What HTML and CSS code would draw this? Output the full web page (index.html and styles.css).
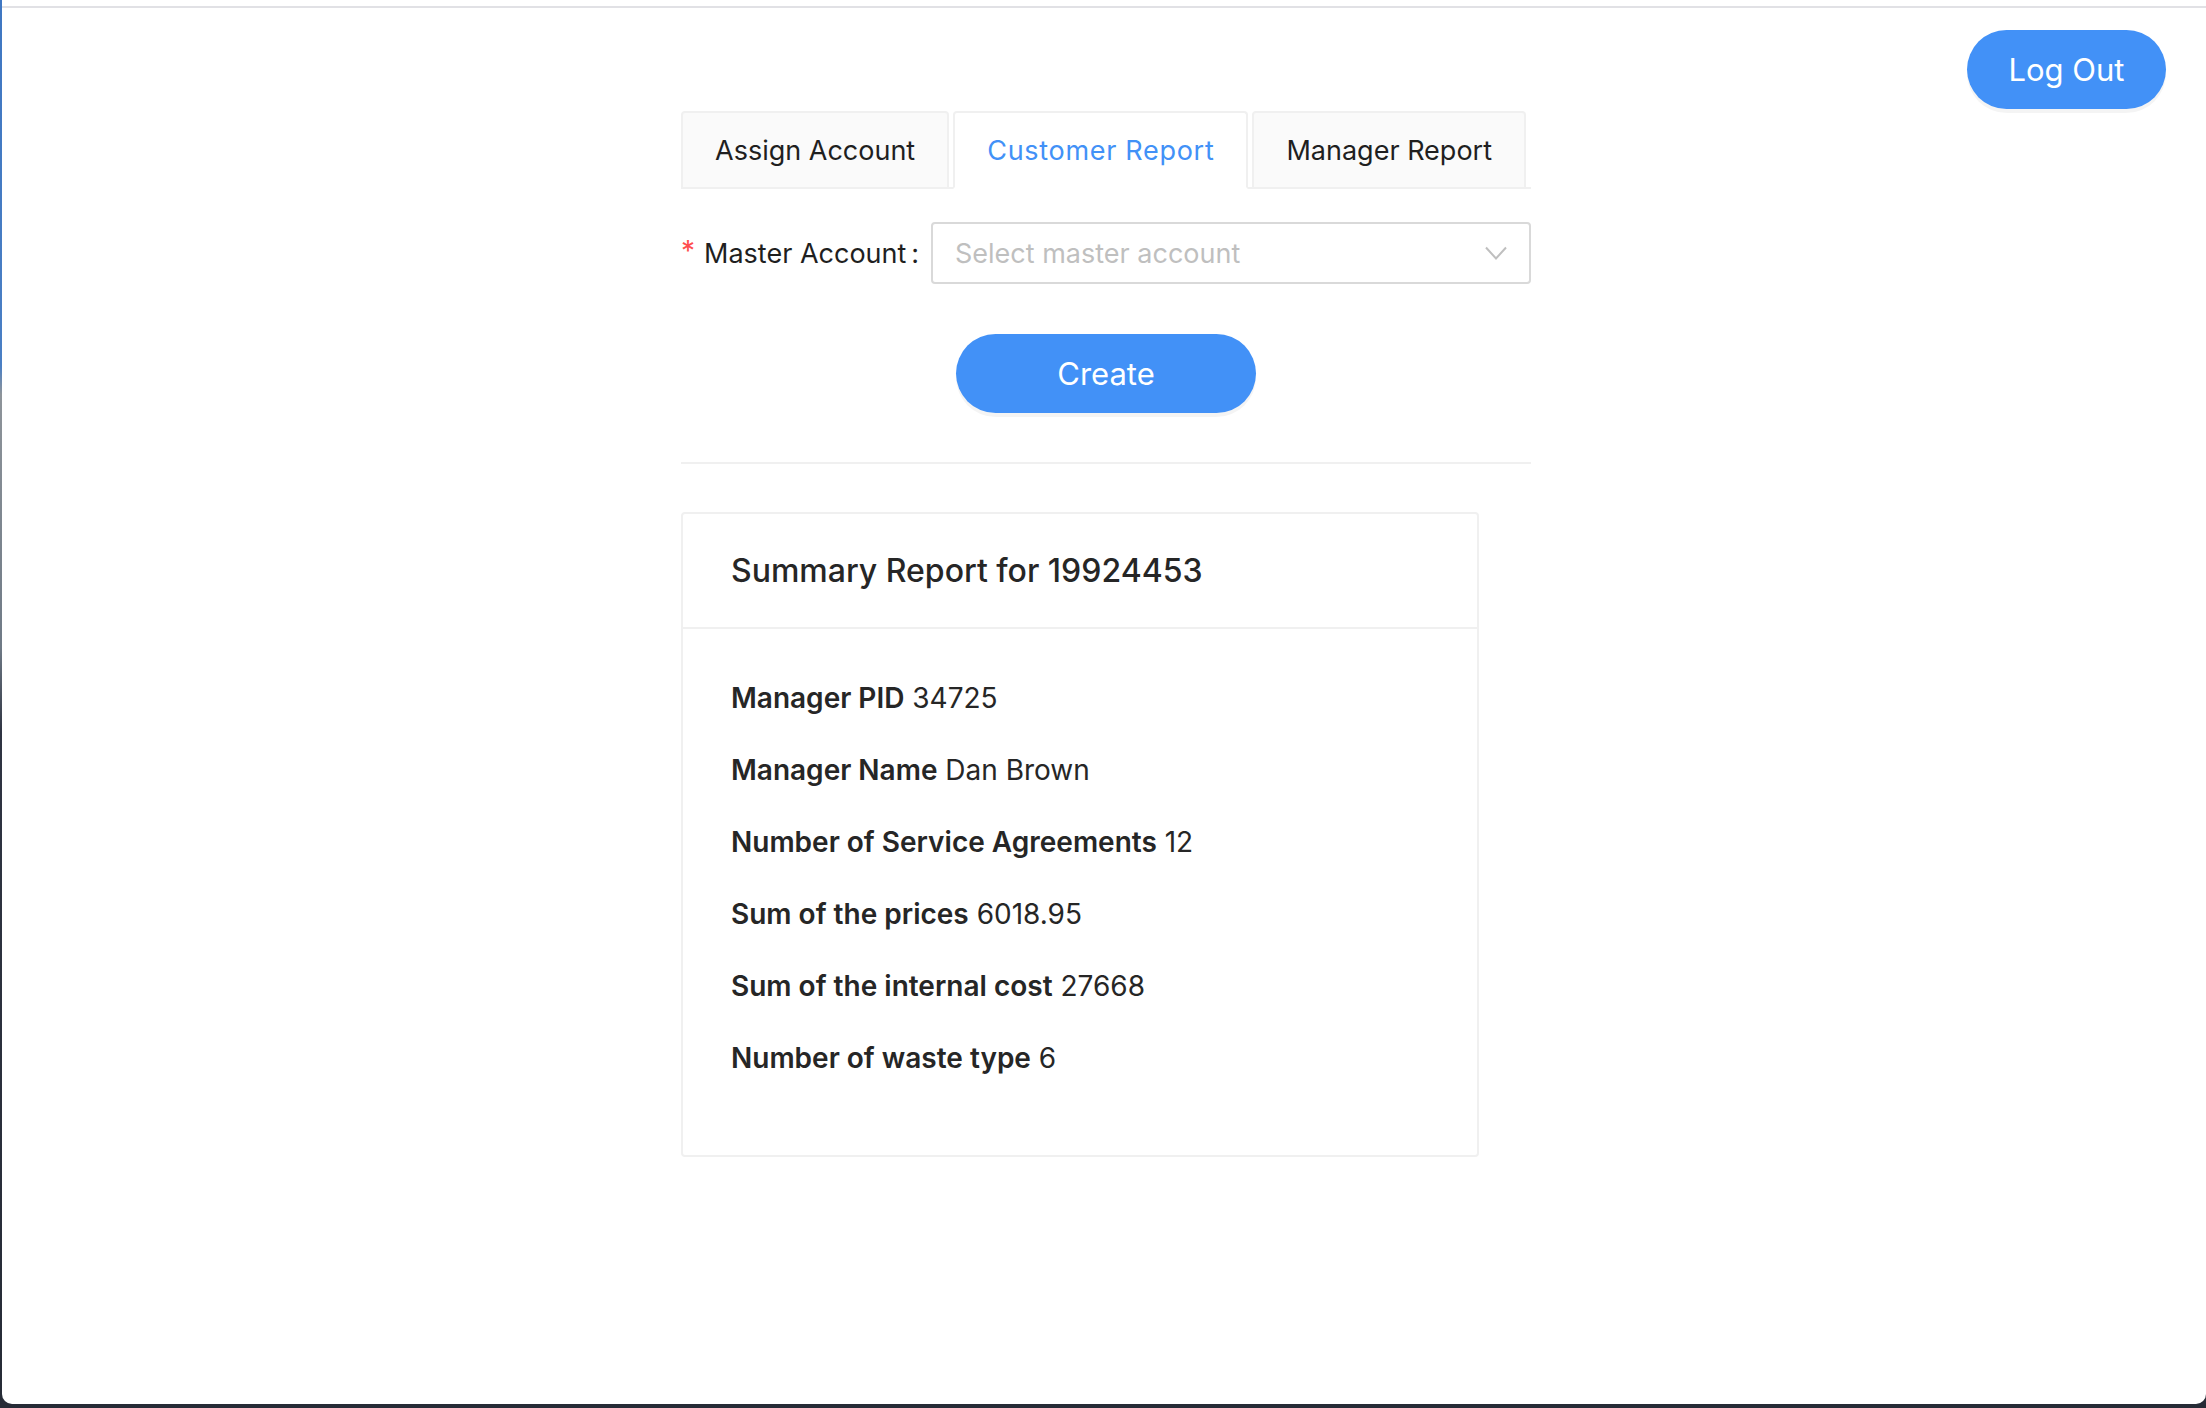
FILE: index.html
```html
<!DOCTYPE html>
<html lang="en">
<head>
<meta charset="utf-8">
<title>Customer Report</title>
<link rel="stylesheet" href="styles.css">
</head>
<body>
<div class="desktop">
  <div class="window">
    <div class="chrome"></div>
    <header class="topbar">
      <button class="btn btn-primary btn-logout" type="button">Log Out</button>
    </header>
    <div class="page">
      <main class="content">
        <div class="tabs">
          <div class="tab">Assign Account</div>
          <div class="tab tab-active">Customer Report</div>
          <div class="tab">Manager Report</div>
        </div>
        <form class="form">
          <div class="form-item">
            <label class="form-label"><span class="req">*</span>Master Account<span class="colon">:</span></label>
            <div class="select">
              <span class="placeholder">Select master account</span>
              <svg class="chevron" width="22" height="14" viewBox="0 0 22 14" aria-hidden="true">
                <polyline points="1,1.5 11,12.5 21,1.5" fill="none" stroke="#bfbfbf" stroke-width="2"/>
              </svg>
            </div>
          </div>
          <div class="form-actions">
            <button class="btn btn-primary btn-create" type="button">Create</button>
          </div>
        </form>
        <div class="divider"></div>
        <section class="card">
          <div class="card-head">Summary Report for 19924453</div>
          <div class="card-body">
            <p><strong>Manager PID</strong> 34725</p>
            <p><strong>Manager Name</strong> Dan Brown</p>
            <p><strong>Number of Service Agreements</strong> 12</p>
            <p><strong>Sum of the prices</strong> 6018.95</p>
            <p><strong>Sum of the internal cost</strong> 27668</p>
            <p><strong>Number of waste type</strong> 6</p>
          </div>
        </section>
      </main>
    </div>
  </div>
</div>
</body>
</html>
```

FILE: styles.css
```css
html, body {
  margin: 0;
  padding: 0;
}

body {
  font-family: Inter, "Noto Sans", "Liberation Sans", sans-serif;
  color: #262626;
}

.desktop {
  width: 2206px;
  height: 1408px;
  box-sizing: border-box;
  padding: 0 0 4px 2px;
  background: linear-gradient(180deg, #3f77c2 0%, #4a7fc4 26%, #8e949a 28%, #6f7a86 46%, #2f3442 52%, #262b36 100%);
  overflow: hidden;
}

.window {
  height: 1404px;
  background: #ffffff;
  border-radius: 0 0 10px 10px;
  overflow: hidden;
}

.chrome {
  height: 6px;
  border-bottom: 2px solid #e1e1e5;
}

.topbar {
  display: flex;
  justify-content: flex-end;
  padding: 22px 40px 0 0;
}

.btn {
  border: none;
  border-radius: 40px;
  height: 79px;
  font-family: Inter, "Noto Sans", "Liberation Sans", sans-serif;
  font-size: 31px;
  cursor: pointer;
  padding: 0;
  white-space: nowrap;
}

.btn-primary {
  background: #4291f7;
  color: #ffffff;
  box-shadow: 0 4px 0 rgba(0, 0, 0, 0.045);
}

.btn-logout {
  width: 199px;
}

.page {
  padding-left: 4px;
}

.content {
  width: 850px;
  margin: 2px auto 0;
}

.tabs {
  display: flex;
  gap: 4px;
  border-bottom: 2px solid #f0f0f0;
}

.tab {
  flex: none;
  white-space: nowrap;
  box-sizing: border-box;
  height: 78px;
  margin-bottom: -2px;
  padding: 0 32px;
  display: flex;
  align-items: center;
  font-size: 27px;
  color: #1f1f1f;
  background: #fafafa;
  border: 2px solid #f0f0f0;
  border-radius: 4px 4px 0 0;
}

.tab-active {
  background: #ffffff;
  color: #4291f7;
  border-bottom-color: #ffffff;
  letter-spacing: 0.7px;
}

.form {
  margin-top: 33px;
}

.form-item {
  display: flex;
  align-items: center;
  margin-bottom: 50px;
}

.form-label {
  flex: 1;
  min-width: 0;
  white-space: nowrap;
  display: flex;
  align-items: center;
  font-size: 27px;
  color: #1f1f1f;
}

.req {
  color: #ff4d4f;
  font-size: 28px;
  margin-right: 9px;
  line-height: 1;
  position: relative;
  top: -2px;
}

.colon {
  margin: 0 16px 0 5px;
}

.select {
  flex: none;
  width: 600px;
  box-sizing: border-box;
  height: 62px;
  border: 2px solid #d9d9d9;
  border-radius: 4px;
  display: flex;
  align-items: center;
  justify-content: space-between;
  padding: 0 22px 0 22px;
}

.placeholder {
  font-size: 27px;
  color: #bfbfbf;
  white-space: nowrap;
}

.chevron {
  display: block;
}

.form-actions {
  display: flex;
  justify-content: center;
}

.btn-create {
  width: 300px;
}

.divider {
  height: 2px;
  background: #f0f0f0;
  margin: 49px 0 48px;
}

.card {
  width: 798px;
  box-sizing: border-box;
  border: 2px solid #f0f0f0;
  border-radius: 4px;
}

.card-head {
  height: 113px;
  display: flex;
  align-items: center;
  padding: 0 48px;
  border-bottom: 2px solid #f0f0f0;
  font-size: 32px;
  font-weight: 500;
  color: #262626;
  white-space: nowrap;
}

.card-body {
  padding: 47px 48px 47px;
  font-size: 28px;
  line-height: 44px;
  color: #262626;
}

.card-body p {
  margin: 0 0 28px;
  white-space: nowrap;
}

.card-body strong {
  font-weight: 600;
}
```
